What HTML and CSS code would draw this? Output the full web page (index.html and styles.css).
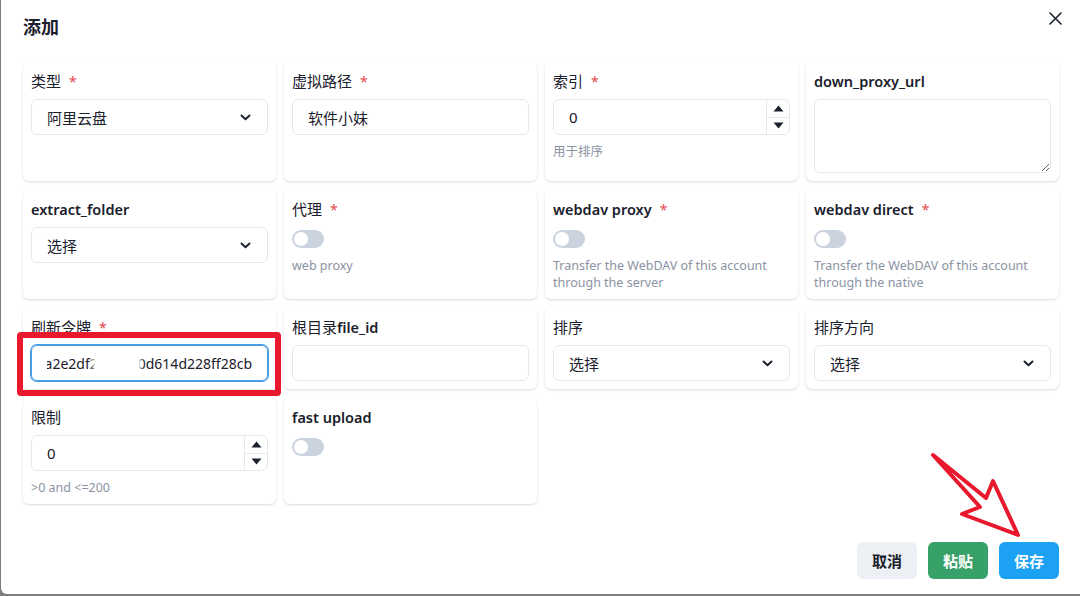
FILE: index.html
```html
<!DOCTYPE html>
<html lang="zh-CN">
<head>
    <meta charset="UTF-8">
    <meta name="viewport" content="width=device-width, initial-scale=1.0">
    <title>添加</title>
    <link rel="stylesheet" href="styles.css">
</head>
<body>
    <div class="modal">
        <div class="modal-header">
            <h2 class="modal-title">添加</h2>
            <button class="close-btn" aria-label="close">
                <svg width="13" height="13" viewBox="0 0 13 13"><path d="M1 1 L12 12 M12 1 L1 12" stroke="#1a202c" stroke-width="1.6" stroke-linecap="round"/></svg>
            </button>
        </div>

        <div class="form-grid">
            <!-- row 1 -->
            <div class="field">
                <div class="label">类型<span class="req">*</span></div>
                <div class="input select">
                    <span>阿里云盘</span>
                    <svg class="chevron" width="11" height="7" viewBox="0 0 11 7"><path d="M1.5 1.5 L5.5 5.2 L9.5 1.5" fill="none" stroke="#1a202c" stroke-width="2" stroke-linecap="round" stroke-linejoin="round"/></svg>
                </div>
            </div>
            <div class="field">
                <div class="label">虚拟路径<span class="req">*</span></div>
                <div class="input">软件小妹</div>
            </div>
            <div class="field">
                <div class="label">索引<span class="req">*</span></div>
                <div class="input number">
                    <span class="num-value">0</span>
                    <div class="stepper">
                        <div class="step"><svg width="11" height="7" viewBox="0 0 11 7"><path d="M5.5 0.5 L10.5 6.5 L0.5 6.5 Z" fill="#1a202c"/></svg></div>
                        <div class="step"><svg width="11" height="7" viewBox="0 0 11 7"><path d="M0.5 0.5 L10.5 0.5 L5.5 6.5 Z" fill="#1a202c"/></svg></div>
                    </div>
                </div>
                <div class="helper">用于排序</div>
            </div>
            <div class="field">
                <div class="label en">down_proxy_url</div>
                <textarea class="textarea"></textarea>
            </div>

            <!-- row 2 -->
            <div class="field">
                <div class="label en">extract_folder</div>
                <div class="input select">
                    <span>选择</span>
                    <svg class="chevron" width="11" height="7" viewBox="0 0 11 7"><path d="M1.5 1.5 L5.5 5.2 L9.5 1.5" fill="none" stroke="#1a202c" stroke-width="2" stroke-linecap="round" stroke-linejoin="round"/></svg>
                </div>
            </div>
            <div class="field">
                <div class="label">代理<span class="req">*</span></div>
                <div class="switch-row"><span class="switch"></span></div>
                <div class="helper">web proxy</div>
            </div>
            <div class="field">
                <div class="label en">webdav proxy<span class="req">*</span></div>
                <div class="switch-row"><span class="switch"></span></div>
                <div class="helper">Transfer the WebDAV of this account through the server</div>
            </div>
            <div class="field">
                <div class="label en">webdav direct<span class="req">*</span></div>
                <div class="switch-row"><span class="switch"></span></div>
                <div class="helper">Transfer the WebDAV of this account through the native</div>
            </div>

            <!-- row 3 -->
            <div class="field">
                <div class="label">刷新令牌<span class="req">*</span></div>
                <div class="input focused">
                    <div class="token">
                        <span class="token-text">a2e2df2<span class="token-gap"></span>0d614d228ff28cb</span>
                        <span class="redact"></span>
                    </div>
                </div>
            </div>
            <div class="field">
                <div class="label">根目录<span class="en">file_id</span></div>
                <div class="input"></div>
            </div>
            <div class="field">
                <div class="label">排序</div>
                <div class="input select">
                    <span>选择</span>
                    <svg class="chevron" width="11" height="7" viewBox="0 0 11 7"><path d="M1.5 1.5 L5.5 5.2 L9.5 1.5" fill="none" stroke="#1a202c" stroke-width="2" stroke-linecap="round" stroke-linejoin="round"/></svg>
                </div>
            </div>
            <div class="field">
                <div class="label">排序方向</div>
                <div class="input select">
                    <span>选择</span>
                    <svg class="chevron" width="11" height="7" viewBox="0 0 11 7"><path d="M1.5 1.5 L5.5 5.2 L9.5 1.5" fill="none" stroke="#1a202c" stroke-width="2" stroke-linecap="round" stroke-linejoin="round"/></svg>
                </div>
            </div>

            <!-- row 4 -->
            <div class="field">
                <div class="label">限制</div>
                <div class="input number">
                    <span class="num-value">0</span>
                    <div class="stepper">
                        <div class="step"><svg width="11" height="7" viewBox="0 0 11 7"><path d="M5.5 0.5 L10.5 6.5 L0.5 6.5 Z" fill="#1a202c"/></svg></div>
                        <div class="step"><svg width="11" height="7" viewBox="0 0 11 7"><path d="M0.5 0.5 L10.5 0.5 L5.5 6.5 Z" fill="#1a202c"/></svg></div>
                    </div>
                </div>
                <div class="helper">&gt;0 and &lt;=200</div>
            </div>
            <div class="field">
                <div class="label en">fast upload</div>
                <div class="switch-row"><span class="switch"></span></div>
            </div>
        </div>

        <div class="modal-footer">
            <button class="btn btn-cancel">取消</button>
            <button class="btn btn-paste">粘贴</button>
            <button class="btn btn-save">保存</button>
        </div>

        <!-- annotations drawn over the screenshot -->
        <div class="mark-box"></div>
        <svg class="mark-arrow" width="104" height="98" viewBox="924 446 104 98">
            <polygon points="933,455 986,498 993,481 1018,535 962,514 980,507" fill="none" stroke="#e8192c" stroke-width="4" stroke-linejoin="round"/>
        </svg>
    </div>
</body>
</html>
```

FILE: styles.css
```css
body {
    margin: 0;
    height: 596px;
    overflow: hidden;
    background-color: #7d7d7d;
    font-family: "Noto Sans", "Noto Sans CJK SC", sans-serif;
    color: #1a202c;
}

.modal {
    position: relative;
    margin-left: 1px;
    width: 1079px;
    height: 594px;
    background-color: #ffffff;
    border-bottom-left-radius: 6px;
    display: flex;
    flex-direction: column;
}

.modal-header {
    padding: 15px 22px 22px;
}

.modal-title {
    margin: 0;
    font-size: 18px;
    line-height: 24px;
    font-weight: 700;
}

.close-btn {
    position: absolute;
    top: 12px;
    right: 18px;
    width: 14px;
    height: 14px;
    padding: 0;
    border: none;
    background: none;
    cursor: pointer;
}

.form-grid {
    display: grid;
    grid-template-columns: repeat(4, minmax(0, 1fr));
    gap: 8px;
    padding: 0 21px 0 22px;
}

.field {
    min-width: 0;
    background-color: #ffffff;
    border-radius: 6px;
    padding: 8px;
    box-shadow: 0 1px 3px rgba(0, 0, 0, 0.1), 0 1px 2px rgba(0, 0, 0, 0.05);
    display: flex;
    flex-direction: column;
}

.label {
    height: 24px;
    font-size: 15px;
    line-height: 24px;
    margin-bottom: 6px;
    color: #1a202c;
    white-space: nowrap;
}

.label.en,
.label .en {
    font-weight: 600;
    font-size: 14.5px;
}

.req {
    color: #e5484d;
    margin-left: 8px;
    font-weight: 400;
    font-size: 14px;
    line-height: 1;
}

.input {
    height: 36px;
    box-sizing: border-box;
    border: 1px solid #e4e8ef;
    border-radius: 6px;
    padding: 0 15px;
    display: flex;
    align-items: center;
    font-size: 15px;
    color: #1a202c;
}

.select {
    justify-content: space-between;
    padding-right: 16px;
}

.number {
    padding-right: 0;
    justify-content: space-between;
}

.stepper {
    width: 22px;
    height: 100%;
    border-left: 1px solid #e4e8ef;
    display: flex;
    flex-direction: column;
}

.step {
    flex: 1;
    display: flex;
    align-items: center;
    justify-content: center;
}

.step + .step {
    border-top: 1px solid #e4e8ef;
}

.textarea {
    height: 74px;
    margin: 0;
    box-sizing: border-box;
    border: 1px solid #e4e8ef;
    border-radius: 6px;
    resize: vertical;
    font-family: inherit;
    outline: none;
}

.helper {
    margin-top: 8px;
    font-size: 12.5px;
    line-height: 17px;
    color: #8b93a3;
}

.switch-row + .helper {
    margin-top: 6px;
}

.switch-row {
    height: 24px;
    display: flex;
    align-items: center;
}

.switch {
    position: relative;
    display: inline-block;
    width: 32px;
    height: 18px;
    border-radius: 9px;
    background-color: #cbd3de;
}

.switch::after {
    content: "";
    position: absolute;
    top: 2px;
    left: 2px;
    width: 14px;
    height: 14px;
    border-radius: 50%;
    background-color: #ffffff;
}

.focused {
    border-color: #4a9de2;
    box-shadow: 0 0 0 1px #4a9de2;
}

.token {
    position: relative;
    overflow: hidden;
    width: 100%;
    min-width: 0;
    display: flex;
    justify-content: flex-end;
    font-size: 14px;
    white-space: nowrap;
}

.token-text {
    flex-shrink: 0;
}

.token-gap {
    display: inline-block;
    width: 40px;
}

.redact {
    position: absolute;
    top: 0;
    bottom: 0;
    left: 48px;
    width: 44px;
    background-color: #ffffff;
    box-shadow: 0 0 4px 2px #ffffff;
}

.modal-footer {
    margin-top: auto;
    display: flex;
    justify-content: flex-end;
    gap: 11px;
    padding: 0 21px 15px;
}

.btn {
    width: 60px;
    height: 37px;
    border: none;
    border-radius: 6px;
    font-family: inherit;
    font-size: 15px;
    font-weight: 700;
    cursor: pointer;
}

.btn-cancel {
    background-color: #ecf0f5;
    color: #1a202c;
}

.btn-paste {
    background-color: #38a169;
    color: #ffffff;
}

.btn-save {
    background-color: #1da1f2;
    color: #ffffff;
}

.mark-box {
    position: absolute;
    left: 16px;
    top: 332px;
    width: 264px;
    height: 64px;
    box-sizing: border-box;
    border: 6px solid #e8192c;
    border-radius: 4px;
}

.mark-arrow {
    position: absolute;
    left: 923px;
    top: 446px;
}
```
